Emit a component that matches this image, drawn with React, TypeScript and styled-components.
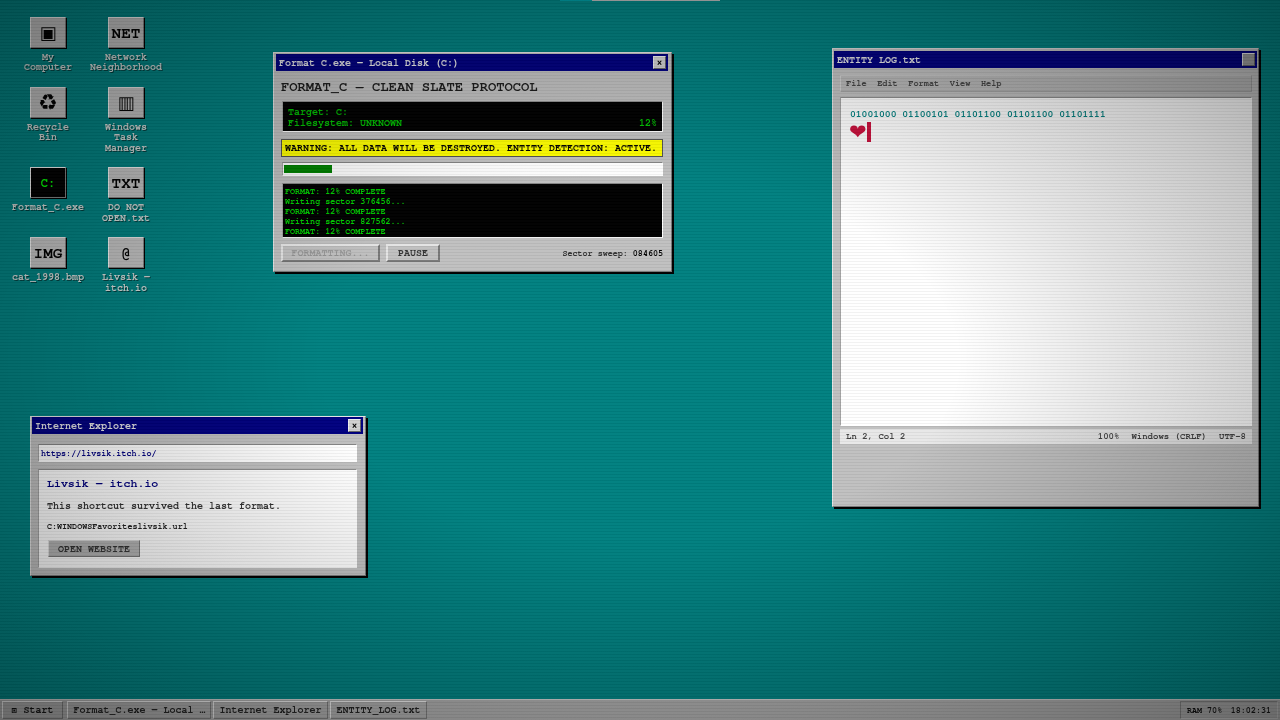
import React from 'react';
import styled, { createGlobalStyle, css } from 'styled-components';

const MONO = `"FreeMono", "Liberation Mono", monospace`;

const bevelOut = css`
  border-top: 1px solid #e4e4e4;
  border-left: 1px solid #e4e4e4;
  border-right: 1px solid #787878;
  border-bottom: 1px solid #787878;
`;

const bevelIn = css`
  border-top: 1px solid #8c8c8c;
  border-left: 1px solid #a4a4a4;
  border-right: 1px solid #ffffff;
  border-bottom: 1px solid #ffffff;
`;

const GlobalStyle = createGlobalStyle`
  html, body {
    margin: 0;
    padding: 0;
    width: 1280px;
    height: 720px;
    overflow: hidden;
    background: #008080;
  }
  * { box-sizing: border-box; }
`;

const desktopIcons = [
  { glyph: '▣', label: 'My\nComputer', symbol: 18 },
  { glyph: 'NET', label: 'Network\nNeighborhood' },
  { glyph: '♻', label: 'Recycle\nBin', symbol: 22 },
  { glyph: '▥', label: 'Windows\nTask\nManager', symbol: 18 },
  { glyph: 'C:', label: 'Format_C.exe', dark: true },
  { glyph: 'TXT', label: 'DO NOT\nOPEN.txt' },
  { glyph: 'IMG', label: 'cat_1998.bmp' },
  { glyph: '@', label: 'Livsik —\nitch.io' },
];

const tasks = ['Format_C.exe — Local …', 'Internet Explorer', 'ENTITY_LOG.txt'];

export default function App() {
  return (
    <>
      <GlobalStyle />
      <Screen>
        <Desktop>
          <IconGrid>
            {desktopIcons.map((icon) => (
              <IconItem key={icon.label}>
                <IconTile $dark={icon.dark} $symbol={icon.symbol}>{icon.glyph}</IconTile>
                <IconLabel>{icon.label}</IconLabel>
              </IconItem>
            ))}
          </IconGrid>

          <TopStrip />

          <FormatWindow>
            <TitleBar>
              <TitleText>Format C.exe — Local Disk (C:)</TitleText>
              <CloseButton>×</CloseButton>
            </TitleBar>
            <FormatBody>
              <Heading>FORMAT_C — CLEAN SLATE PROTOCOL</Heading>
              <Terminal>
                <TerminalRow>Target: C:</TerminalRow>
                <TerminalRow>
                  <span>Filesystem: UNKNOWN</span>
                  <span>12%</span>
                </TerminalRow>
              </Terminal>
              <Warning>WARNING: ALL DATA WILL BE DESTROYED. ENTITY DETECTION: ACTIVE.</Warning>
              <ProgressTrack>
                <ProgressFill style={{ width: '12.8%' }} />
              </ProgressTrack>
              <LogBox>
                <div>FORMAT: 12% COMPLETE</div>
                <div>Writing sector 376456...</div>
                <div>FORMAT: 12% COMPLETE</div>
                <div>Writing sector 827562...</div>
                <div>FORMAT: 12% COMPLETE</div>
              </LogBox>
              <ActionRow>
                <ActionButton disabled $wide>FORMATTING...</ActionButton>
                <ActionButton>PAUSE</ActionButton>
                <SweepText>Sector sweep: <SweepValue>084605</SweepValue></SweepText>
              </ActionRow>
            </FormatBody>
          </FormatWindow>

          <BrowserWindow>
            <TitleBar>
              <TitleText>Internet Explorer</TitleText>
              <CloseButton>×</CloseButton>
            </TitleBar>
            <BrowserBody>
              <AddressBar>https://livsik.itch.io/</AddressBar>
              <PageCard>
                <PageTitle>Livsik — itch.io</PageTitle>
                <PageText>This shortcut survived the last format.</PageText>
                <PagePath>C:WINDOWSFavoriteslivsik.url</PagePath>
                <OpenButton>OPEN WEBSITE</OpenButton>
              </PageCard>
            </BrowserBody>
          </BrowserWindow>

          <EntityWindow>
            <TitleBar>
              <TitleText>ENTITY LOG.txt</TitleText>
              <CloseButton $faded />
            </TitleBar>
            <EntityBody>
              <MenuBar>
                <span>File</span>
                <span>Edit</span>
                <span>Format</span>
                <span>View</span>
                <span>Help</span>
              </MenuBar>
              <TextArea>
                <BinaryLine>01001000 01100101 01101100 01101100 01101111</BinaryLine>
                <HeartLine>
                  ❤<Caret />
                </HeartLine>
              </TextArea>
              <StatusBar>
                <span>Ln 2, Col 2</span>
                <StatusRight>
                  <span>100%</span>
                  <span>Windows (CRLF)</span>
                  <span>UTF-8</span>
                </StatusRight>
              </StatusBar>
            </EntityBody>
          </EntityWindow>
        </Desktop>

        <Taskbar>
          <StartButton>
            <StartGlyph>▣</StartGlyph> Start
          </StartButton>
          {tasks.map((task, index) => (
            <TaskButton key={task} $first={index === 0}>
              {task}
            </TaskButton>
          ))}
          <Tray>
            <span>RAM 70%</span>
            <span>18:02:31</span>
          </Tray>
        </Taskbar>

        <Vignette />
        <Scanlines />
      </Screen>
    </>
  );
}

const Screen = styled.div`
  position: relative;
  width: 1280px;
  height: 720px;
  overflow: hidden;
  display: flex;
  flex-direction: column;
  background: #008080;
  font-family: ${MONO};
  font-size: 10px;
  font-weight: 700;
  color: #000;
  filter: blur(0.55px);
`;

const Desktop = styled.div`
  position: relative;
  flex: 1;
  min-height: 0;
`;

const IconGrid = styled.div`
  display: grid;
  grid-template-columns: 78px 78px;
  align-items: start;
  padding: 17px 0 0 9px;
`;

const IconItem = styled.div`
  display: flex;
  flex-direction: column;
  align-items: center;
  padding-bottom: 14.2px;
`;

const IconTile = styled.div<{ $dark?: boolean; $symbol?: number }>`
  width: 36px;
  height: 31px;
  display: flex;
  align-items: center;
  justify-content: center;
  font-family: ${(p) => (p.$symbol ? `"DejaVu Sans", sans-serif` : MONO)};
  font-weight: 700;
  font-size: ${(p) => (p.$dark ? 12 : p.$symbol ?? 16)}px;
  background: ${(p) => (p.$dark ? '#000' : '#c0c0c0')};
  color: ${(p) => (p.$dark ? '#00ff00' : '#000')};
  border-top: 1px solid #f0f0f0;
  border-left: 1px solid #f0f0f0;
  border-right: 1px solid #808080;
  border-bottom: 1px solid #808080;
  box-shadow: 1px 1px 0 #000;
`;

const IconLabel = styled.div`
  margin-top: 4px;
  width: 78px;
  text-align: center;
  white-space: pre-line;
  line-height: 10.4px;
  font-size: 10px;
  color: #d4d8d6;
  text-shadow: 1px 1px 0 rgba(0, 0, 0, 0.5);
`;

const TopStrip = styled.div`
  position: absolute;
  top: 0;
  left: 560px;
  width: 160px;
  height: 1px;
  background: linear-gradient(to right, #00a0a8 0 20%, #c0c0c0 20% 100%);
`;

const Win = styled.section`
  position: absolute;
  display: flex;
  flex-direction: column;
  background: #c0c0c0;
  ${bevelOut}
  box-shadow: 2px 2px 0 #000;
`;

const FormatWindow = styled(Win)`
  left: 273px;
  top: 52px;
  width: 399px;
  height: 220px;
  padding: 1px 3px 2px 2px;
`;

const BrowserWindow = styled(Win)`
  left: 30px;
  top: 416px;
  width: 336px;
  height: 160px;
  padding: 0 2px 2px 1px;
`;

const EntityWindow = styled(Win)`
  left: 832px;
  top: 48px;
  width: 427px;
  height: 459px;
  padding: 2px 1px;
`;

const TitleBar = styled.header`
  display: flex;
  align-items: center;
  justify-content: space-between;
  height: 17px;
  flex-shrink: 0;
  padding: 0 2px 0 3px;
  background: #000080;
`;

const TitleText = styled.span`
  color: #e8e8e8;
  font-size: 10px;
  line-height: 12px;
  font-weight: 700;
`;

const CloseButton = styled.button<{ $faded?: boolean }>`
  width: 13px;
  height: 13px;
  padding: 0;
  display: flex;
  align-items: center;
  justify-content: center;
  font-family: ${MONO};
  font-size: 10px;
  font-weight: 700;
  color: #000;
  background: ${(p) => (p.$faded ? '#a0a0a0' : '#d0d0d0')};
  border: 1px solid #eee;
  border-right-color: #666;
  border-bottom-color: #666;
`;

const FormatBody = styled.div`
  flex: 1;
  display: flex;
  flex-direction: column;
  padding: 9px 5px 0;
`;

const Heading = styled.h1`
  margin: 0 0 6px;
  font-family: ${MONO};
  font-size: 13.8px;
  line-height: 15px;
  font-weight: 700;
  color: #1c1c1c;
`;

const Terminal = styled.div`
  height: 31px;
  margin-left: 1px;
  padding: 5px 5px;
  background: #000;
  color: #00c000;
  line-height: 10.5px;
  ${bevelIn}
`;

const TerminalRow = styled.div`
  display: flex;
  justify-content: space-between;
`;

const Warning = styled.div`
  height: 18px;
  margin-top: 7px;
  padding: 0 3px;
  display: flex;
  align-items: center;
  background: #ffff00;
  font-weight: 700;
  white-space: nowrap;
  border: 1px solid #555;
`;

const ProgressTrack = styled.div`
  height: 14px;
  margin: 5px 0 0 1px;
  padding: 2px 1px;
  background: #fff;
  ${bevelIn}
`;

const ProgressFill = styled.div`
  height: 100%;
  background: #008000;
`;

const LogBox = styled.div`
  height: 55px;
  margin: 7px 0 0 1px;
  padding: 3px 2px;
  background: #000;
  color: #00d000;
  font-size: 8.4px;
  line-height: 10px;
  overflow: hidden;
  ${bevelIn}
`;

const ActionRow = styled.div`
  display: flex;
  align-items: center;
  gap: 6px;
  margin-top: 6px;
`;

const ActionButton = styled.button<{ $wide?: boolean }>`
  height: 18px;
  width: ${(p) => (p.$wide ? '99px' : '54px')};
  padding: 0;
  font-family: ${MONO};
  font-size: 10px;
  font-weight: 700;
  color: ${(p) => (p.disabled ? '#999' : '#333')};
  background: #c0c0c0;
  ${bevelOut}
  border-width: 2px;
`;

const SweepText = styled.span`
  margin-left: auto;
  font-size: 8.4px;
  color: #333;
`;

const SweepValue = styled.span`
  color: #000;
`;

const BrowserBody = styled.div`
  flex: 1;
  display: flex;
  flex-direction: column;
  padding: 10px 6px 0;
`;

const AddressBar = styled.div`
  height: 18px;
  padding: 0 2px;
  display: flex;
  align-items: center;
  background: #fff;
  color: #000080;
  font-size: 8.4px;
  ${bevelIn}
`;

const PageCard = styled.div`
  height: 99px;
  margin-top: 7px;
  padding: 7px 8px;
  background: #fff;
  ${bevelIn}
`;

const PageTitle = styled.h2`
  margin: 0;
  font-family: ${MONO};
  font-size: 11.6px;
  line-height: 14px;
  font-weight: 700;
  color: #000080;
`;

const PageText = styled.p`
  margin: 9px 0 0;
  font-size: 10px;
  line-height: 12px;
  color: #333;
`;

const PagePath = styled.p`
  margin: 9px 0 0;
  font-size: 8.4px;
  line-height: 11px;
  color: #222;
`;

const OpenButton = styled.button`
  display: block;
  width: 92px;
  height: 17px;
  margin: 8px 0 0 1px;
  padding: 0;
  font-family: ${MONO};
  font-size: 10px;
  font-weight: 700;
  color: #333;
  background: #b4b4b4;
  ${bevelOut}
`;

const EntityBody = styled.div`
  flex: 1;
  display: flex;
  flex-direction: column;
  padding: 7px 5px 0 6px;
`;

const MenuBar = styled.nav`
  height: 17px;
  padding: 0 5px;
  display: flex;
  align-items: center;
  gap: 10.5px;
  font-size: 8.6px;
  color: #444;
  background: #b8b8b8;
  border: 1px solid #d0d0d0;
  border-right-color: #a0a0a0;
  border-bottom-color: #a0a0a0;
`;

const TextArea = styled.div`
  height: 329px;
  margin-top: 5px;
  padding: 10px 8px;
  background: #fff;
  ${bevelIn}
`;

const BinaryLine = styled.div`
  margin-left: 1px;
  font-size: 9.7px;
  line-height: 12px;
  color: #008080;
`;

const HeartLine = styled.div`
  display: flex;
  align-items: center;
  height: 20px;
  margin-top: 2px;
  font-family: "DejaVu Sans", sans-serif;
  font-size: 21px;
  line-height: 20px;
  color: #c8103c;
`;

const Caret = styled.span`
  width: 4px;
  height: 20px;
  margin-left: 0;
  background: #c8103c;
`;

const StatusBar = styled.footer`
  height: 15px;
  margin-top: 3px;
  padding: 0 6px;
  display: flex;
  align-items: center;
  justify-content: space-between;
  font-size: 9px;
  color: #444;
  background: #e8e8e8;
`;

const StatusRight = styled.div`
  display: flex;
  gap: 12px;
`;

const Taskbar = styled.footer`
  height: 21px;
  flex-shrink: 0;
  display: flex;
  align-items: center;
  gap: 2px;
  padding: 1px 2px;
  background: #a8a8a8;
  border-top: 1px solid #d8d8d8;
`;

const StartButton = styled.button`
  width: 61px;
  height: 18px;
  margin-right: 2px;
  padding: 0;
  font-family: ${MONO};
  font-size: 10px;
  font-weight: 700;
  color: #111;
  background: #a8a8a8;
  ${bevelOut}
`;

const StartGlyph = styled.span`
  font-weight: 700;
`;

const TaskButton = styled.button<{ $first?: boolean }>`
  width: ${(p) => (p.$first ? '144px' : 'auto')};
  height: 18px;
  padding: 0 5.5px;
  font-family: ${MONO};
  font-size: 10px;
  font-weight: 700;
  color: #222;
  background: #a8a8a8;
  white-space: nowrap;
  ${bevelOut}
`;

const Tray = styled.div`
  margin-left: auto;
  width: 98px;
  height: 18px;
  display: flex;
  align-items: center;
  justify-content: space-between;
  padding: 0 6px;
  font-size: 8.4px;
  color: #111;
  border: 1px solid #bcbcbc;
  border-top-color: #808080;
  border-left-color: #808080;
`;

const Vignette = styled.div`
  position: absolute;
  inset: 0;
  pointer-events: none;
  background: radial-gradient(ellipse at 50% 50%, rgba(0, 0, 0, 0) 35%, rgba(0, 0, 0, 0.22) 75%, rgba(0, 0, 0, 0.38) 100%);
`;

const Scanlines = styled.div`
  position: absolute;
  inset: 0;
  pointer-events: none;
  background: repeating-linear-gradient(
    to bottom,
    rgba(0, 0, 0, 0.05) 0,
    rgba(0, 0, 0, 0.05) 1px,
    rgba(255, 255, 255, 0.015) 1px,
    rgba(255, 255, 255, 0.015) 3px
  );
`;
